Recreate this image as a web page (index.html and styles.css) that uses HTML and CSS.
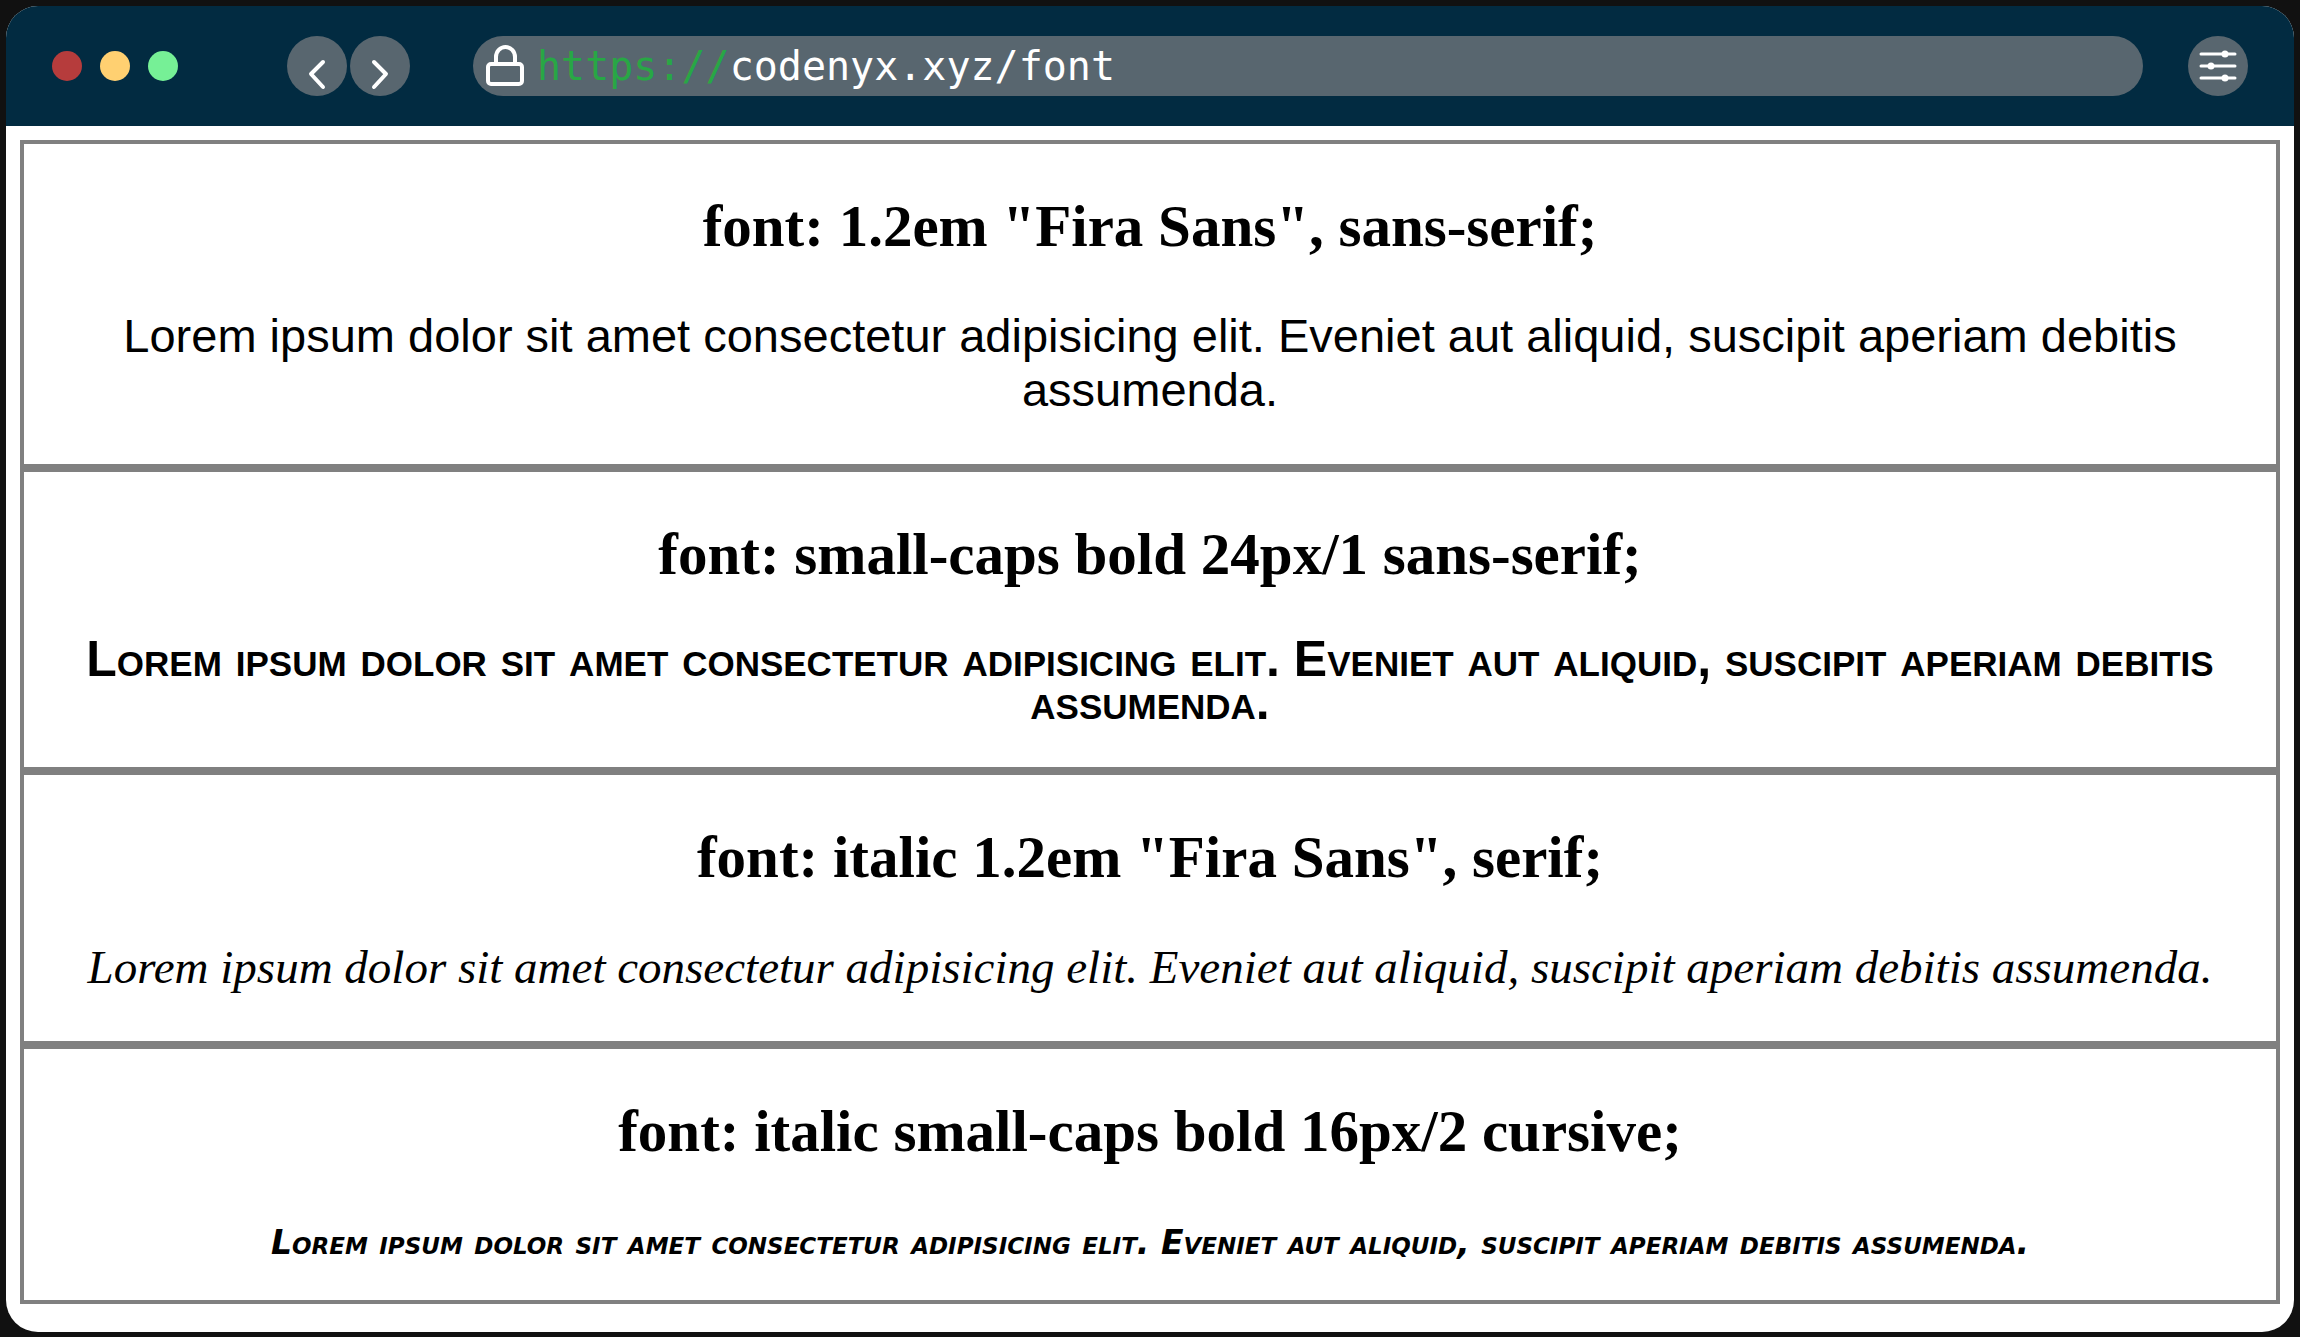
FILE: index.html
```html
<!DOCTYPE html>
<html lang="en">
<head>
<meta charset="utf-8">
<meta name="viewport" content="width=device-width, initial-scale=1">
<title>CSS font property</title>
<link rel="stylesheet" href="styles.css">
</head>
<body>
<div class="window">
  <header class="toolbar">
    <div class="lights">
      <span class="light red"></span>
      <span class="light yellow"></span>
      <span class="light green"></span>
    </div>
    <nav class="nav">
      <button class="round" type="button" aria-label="Back">
        <svg width="60" height="60" viewBox="0 0 60 60"><path d="M36 26 24 38 36 51"/></svg>
      </button>
      <button class="round" type="button" aria-label="Forward">
        <svg width="60" height="60" viewBox="0 0 60 60"><path d="M24 26 36 38 24 51"/></svg>
      </button>
    </nav>
    <div class="address">
      <svg class="lock" width="40" height="44" viewBox="0 0 40 44" aria-hidden="true"><rect x="3" y="20" width="34" height="20" rx="3"/><path d="M11 20V13a9 9.500 0 0 1 19 0V20"/></svg>
      <a class="url" href="https://codenyx.xyz/font"><span class="scheme">https://</span>codenyx.xyz/font</a>
    </div>
    <button class="round" type="button" aria-label="Settings">
      <svg class="sliders" width="60" height="60" viewBox="0 0 60 60"><path d="M13 18H47M13 30H47M13 42H47"/><circle cx="37" cy="18" r="3.500"/><circle cx="23" cy="30" r="3.500"/><circle cx="37" cy="42" r="3.500"/></svg>
    </button>
  </header>
  <main class="page">
    <section class="sample">
      <h2>font: 1.2em "Fira Sans", sans-serif;</h2>
      <p class="sans">Lorem ipsum dolor sit amet consectetur adipisicing elit. Eveniet aut aliquid, suscipit aperiam debitis assumenda.</p>
    </section>
    <section class="sample">
      <h2>font: small-caps bold 24px/1 sans-serif;</h2>
      <p class="caps">Lorem ipsum dolor sit amet consectetur adipisicing elit. Eveniet aut aliquid, suscipit aperiam debitis assumenda.</p>
    </section>
    <section class="sample">
      <h2>font: italic 1.2em "Fira Sans", serif;</h2>
      <p class="serif">Lorem ipsum dolor sit amet consectetur adipisicing elit. Eveniet aut aliquid, suscipit aperiam debitis assumenda.</p>
    </section>
    <section class="sample">
      <h2>font: italic small-caps bold 16px/2 cursive;</h2>
      <p class="cursive">Lorem ipsum dolor sit amet consectetur adipisicing elit. Eveniet aut aliquid, suscipit aperiam debitis assumenda.</p>
    </section>
  </main>
</div>
</body>
</html>
```
FILE: styles.css
```css
* {
  box-sizing: border-box;
}

body {
  margin: 0;
  padding: 6px;
  background: #111;
  color: #000;
}

.window {
  background: #fff;
  border-radius: 32px;
  overflow: hidden;
}

.toolbar {
  display: flex;
  align-items: center;
  height: 120px;
  padding: 0 46px;
  background: #022b41;
}

.lights {
  display: flex;
  gap: 18px;
  margin-right: 109px;
}

.light {
  width: 30px;
  height: 30px;
  border-radius: 50%;
}

.red { background: #b63c3c; }
.yellow { background: #ffd071; }
.green { background: #76f096; }

.nav {
  display: flex;
  gap: 3px;
  margin-right: 63px;
}

.round {
  flex: none;
  width: 60px;
  height: 60px;
  padding: 0;
  border: 0;
  border-radius: 50%;
  background: #58666f;
}

.round svg {
  display: block;
}

svg {
  fill: none;
  stroke: #fff;
  stroke-width: 4;
  stroke-linecap: round;
  stroke-linejoin: round;
}

.sliders {
  stroke-width: 3;
}

.sliders circle {
  fill: #fff;
  stroke: none;
}

.address {
  display: flex;
  flex: 1;
  align-items: center;
  gap: 12px;
  height: 60px;
  margin-right: 45px;
  padding: 0 12px;
  border-radius: 30px;
  background: #58666f;
}

.url {
  color: #fff;
  font: 40px/60px "DejaVu Sans Mono", monospace;
  text-decoration: none;
}

.scheme {
  color: #28a745;
}

.page {
  padding: 14px 14px 28px;
}

.sample {
  padding: 0 24px;
  border: 4px solid #808080;
  text-align: center;
}

h2 {
  margin: 49px 0;
  font: bold 59px/67px "Liberation Serif", "Times New Roman", serif;
}

p {
  margin: 1em 0;
}

.sans {
  font: 47px/54px "Liberation Sans", Arial, sans-serif;
}

.caps {
  margin-bottom: 43px;
  font: small-caps bold 50px/43px "Liberation Sans", Arial, sans-serif;
}

.serif {
  font: italic 47px/54px "Liberation Serif", "Times New Roman", serif;
}

.cursive {
  margin-bottom: 28px;
  font: italic small-caps bold 33px/58px "Comic Sans MS", "DejaVu Sans", cursive;
}
```
